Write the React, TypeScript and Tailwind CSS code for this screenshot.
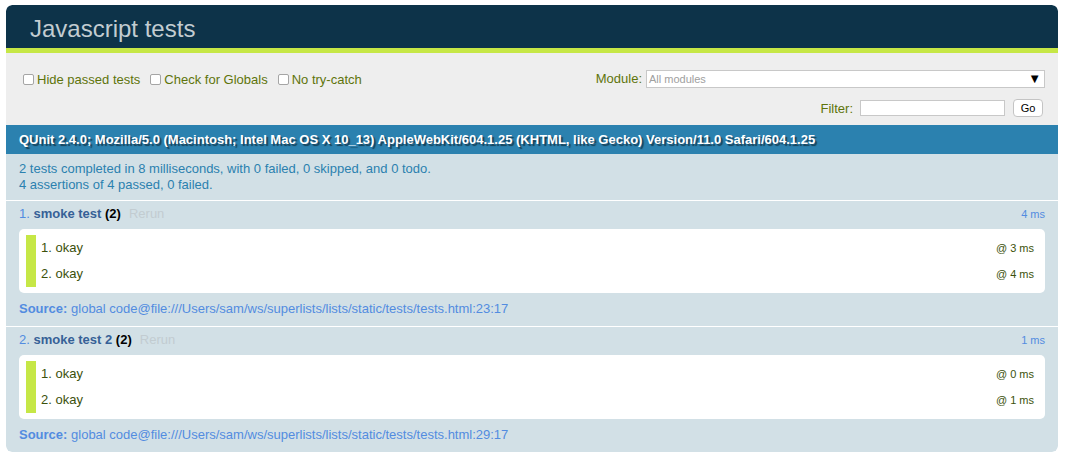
const font = "font-['Liberation_Sans',Arial,sans-serif]";

const tests = [
  {
    n: 1,
    name: "smoke test",
    count: 2,
    runtime: "4 ms",
    asserts: [
      { msg: "okay", at: "@ 3 ms" },
      { msg: "okay", at: "@ 4 ms" },
    ],
    source: "global code@file:///Users/sam/ws/superlists/lists/static/tests/tests.html:23:17",
  },
  {
    n: 2,
    name: "smoke test 2",
    count: 2,
    runtime: "1 ms",
    asserts: [
      { msg: "okay", at: "@ 0 ms" },
      { msg: "okay", at: "@ 1 ms" },
    ],
    source: "global code@file:///Users/sam/ws/superlists/lists/static/tests/tests.html:29:17",
  },
];

function Check({ label }: { label: string }) {
  return (
    <label className="flex items-center gap-[3px]">
      <span className="inline-block h-[11px] w-[11px] rounded-[2px] border border-[#a5a5a5] bg-white" />
      <span>{label}</span>
    </label>
  );
}

export default function App() {
  return (
    <div className={`min-h-[459px] bg-white pt-[5px] pr-[7px] pl-[6px] ${font}`}>
      <div className="overflow-hidden rounded-[6px]">
        <h1 className="flex h-[43px] items-center rounded-t-[6px] bg-[#0D3349] pt-[5px] pl-6 text-[24px] leading-none font-normal text-[#C2CCD1]">
          Javascript tests
        </h1>
        <div className="h-[5px] bg-[#C6E746]" />

        <div className="h-[72px] bg-[#EEEEEE] px-[13px] pt-[16px] text-[13px] text-[#5E740B]">
          <div className="flex items-start justify-between">
            <div className="flex gap-[10px] pt-[1px] pl-[4px]">
              <Check label="Hide passed tests" />
              <Check label="Check for Globals" />
              <Check label="No try-catch" />
            </div>
            <div className="flex flex-col items-end gap-[10px]">
              <div className="flex items-center gap-[4px]">
                <span>Module:</span>
                <div className="flex h-[18px] w-[399px] items-center justify-between border border-[#c8c8c8] bg-white pr-[3px] pl-[2px]">
                  <span className="text-[11px] text-[#a0a0a0]">All modules</span>
                  <span className="text-[13px] leading-none text-black">▼</span>
                </div>
              </div>
              <div className="flex items-center gap-[7px] pr-[2px]">
                <span>Filter:</span>
                <div className="h-[16px] w-[145px] border border-[#c8c8c8] bg-white" />
                <button className="ml-[1px] flex h-[18px] w-[30px] items-center justify-center rounded-[4px] border border-[#c4c4c4] bg-white text-[11px] text-black">
                  Go
                </button>
              </div>
            </div>
          </div>
        </div>

        <div className="flex h-[29px] items-center bg-[#2B81AF] px-[13px] text-[13px] font-bold text-white [text-shadow:2px_2px_1px_rgba(0,0,0,0.5)]">
          QUnit 2.4.0; Mozilla/5.0 (Macintosh; Intel Mac OS X 10_13) AppleWebKit/604.1.25 (KHTML, like Gecko) Version/11.0 Safari/604.1.25
        </div>

        <div className="border-b border-white bg-[#D2E0E6] px-[13px] pt-[7px] pb-[7px] text-[13px] leading-[16px] text-[#2B81AF]">
          <div>2 tests completed in 8 milliseconds, with 0 failed, 0 skipped, and 0 todo.</div>
          <div>4 assertions of 4 passed, 0 failed.</div>
        </div>

        <ol>
          {tests.map((t) => (
            <li
              key={t.n}
              className="border-b border-white bg-[#D2E0E6] px-[13px] pt-[5px] pb-[9px] text-[13px] text-[#528CE0] last:rounded-b-[6px] last:border-b-0"
            >
              <div className="flex items-center justify-between leading-[16px]">
                <div>
                  <span>{t.n}. </span>
                  <strong className="text-[#366097]">{t.name}</strong>{" "}
                  <strong className="text-black">({t.count})</strong>
                  <span className="pl-[8px] text-[#C2CCD1]">Rerun</span>
                </div>
                <span className="text-[11px]">{t.runtime}</span>
              </div>
              <ol className="mt-[7px] rounded-[5px] bg-white py-[6px] pr-[11px] pl-[7px]">
                {t.asserts.map((a, i) => (
                  <li
                    key={i}
                    className="flex h-[26px] items-center justify-between border-l-[10px] border-[#C6E746] pl-[5px] text-[#3C510C]"
                  >
                    <span>
                      {i + 1}. {a.msg}
                    </span>
                    <span className="text-[11px]">{a.at}</span>
                  </li>
                ))}
              </ol>
              <div className="mt-[8px] leading-[16px]">
                <strong>Source:</strong> {t.source}
              </div>
            </li>
          ))}
        </ol>
      </div>
    </div>
  );
}
